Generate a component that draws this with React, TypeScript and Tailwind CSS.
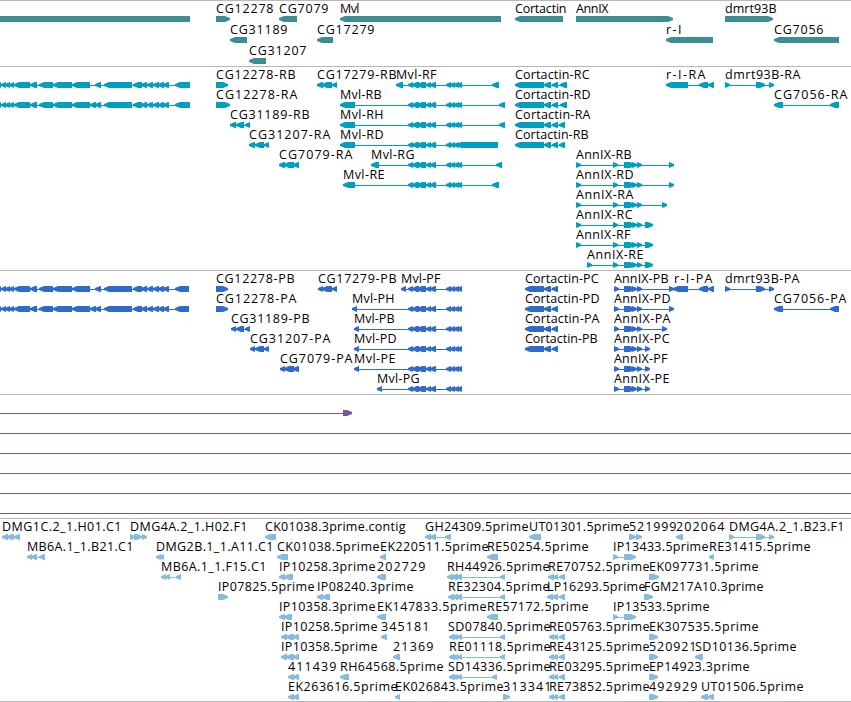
import React from 'react';

type Exon = [number, number];

interface Feature {
  row: number;
  label?: string;
  x: number;
  end?: number; // right edge of the label
  dir: 'L' | 'R';
  exons: Exon[];
}

interface TrackProps {
  color: string;
  height: number;
  pitch?: number;
  features: Feature[];
  className: string;
}

const HEAD = 5;

const f = (row: number, label: string, x: number, end: number, dir: 'L' | 'R', ...exons: Exon[]): Feature => ({
  row, label, x, end, dir, exons,
});

const bare = (row: number, dir: 'L' | 'R', ...exons: Exon[]): Feature => ({ row, x: exons[0][0], dir, exons });

const exonPoints = ([a, b]: Exon, dir: 'L' | 'R', y: number) => {
  const head = Math.min(HEAD, b - a);
  return dir === 'L'
    ? `${a},${y + 4} ${a},${y + 2} ${a + head},${y} ${b},${y} ${b},${y + 6} ${a + head},${y + 6}`
    : `${b},${y + 4} ${b},${y + 2} ${b - head},${y} ${a},${y} ${a},${y + 6} ${b - head},${y + 6}`;
};

const Track: React.FC<TrackProps> = ({ color, height, pitch = 20, features, className }) => (
  <section className={className}>
    <svg width={851} height={height} className="block">
      {features.map((ft, i) => {
        const y = 15 + ft.row * pitch;
        const from = ft.exons[0][0];
        const to = ft.exons[ft.exons.length - 1][1];
        return (
          <g key={i}>
            <rect x={from} y={y + 3} width={to - from} height={1} fill={color} />
            {ft.exons.map((ex, j) => (
              <polygon key={j} points={exonPoints(ex, ft.dir, y)} fill={color} />
            ))}
            {ft.label && (
              <text x={ft.x} y={y - 3} textLength={ft.end! - ft.x + 0.5} fill="#000000">
                {ft.label}
              </text>
            )}
          </g>
        );
      })}
    </svg>
  </section>
);

// Genes
const genes: Feature[] = [
  bare(0, 'L', [-10, 190]),
  f(0, 'CG12278', 216, 273, 'R', [216, 230]),
  f(0, 'CG7079', 279, 328, 'L', [279, 297]),
  f(0, 'Mvl', 340, 359, 'L', [340, 501]),
  f(0, 'Cortactin', 515, 566, 'L', [515, 563]),
  f(0, 'AnnIX', 576, 608, 'R', [576, 673]),
  f(0, 'dmrt93B', 725, 776, 'R', [725, 773]),
  f(1, 'CG31189', 230, 287, 'L', [230, 247]),
  f(1, 'CG17279', 317, 374, 'L', [317, 333]),
  f(1, 'r-I', 666, 681, 'L', [666, 713]),
  f(1, 'CG7056', 774, 823, 'L', [774, 839]),
  f(2, 'CG31207', 249, 306, 'L', [249, 266]),
];

// Exon groups shared by several transcripts
const leftA: Exon[] = [[1, 6], [5, 10], [9, 14], [14, 30], [30, 37], [39, 53], [53, 72], [72, 90]];
const leftB: Exon[] = [
  [95, 101], [104, 132], [133, 142], [141, 147], [147, 153], [153, 159], [158, 164], [163, 169],
];
const mvl: Exon[] = [
  [408, 413], [412, 419], [417, 426], [426, 431], [430, 436],
  [446, 451], [450, 455], [454, 459], [457, 462],
];
const ann: Exon[] = [[624, 635], [632, 637], [637, 642]];

const transcripts: Feature[] = [
  bare(0, 'L', [-4, 1], ...leftA, ...leftB, [175, 190]),
  bare(1, 'L', [-4, 1], ...leftA, [90, 96], ...leftB, [175, 190]),
  f(0, 'CG12278-RB', 216, 295, 'R', [216, 228]),
  f(0, 'CG17279-RB', 317, 396, 'L', [317, 323], [322, 332], [332, 337]),
  f(0, 'Mvl-RF', 396, 436, 'L', [396, 403], ...mvl, [492, 499]),
  f(0, 'Cortactin-RC', 515, 589, 'L', [515, 544], [544, 551], [552, 558], [560, 567]),
  f(0, 'r-I-RA', 666, 705, 'L', [666, 688], [699, 708], [708, 714]),
  f(0, 'dmrt93B-RA', 725, 800, 'R', [725, 730], [756, 765], [769, 774]),
  f(1, 'CG12278-RA', 216, 297, 'R', [216, 230]),
  f(1, 'Mvl-RB', 340, 381, 'L', [340, 355], ...mvl, [499, 505]),
  f(1, 'Cortactin-RD', 515, 590, 'L', [515, 544], [544, 551], [552, 558], [560, 567]),
  f(1, 'CG7056-RA', 774, 847, 'L', [774, 783], [830, 839]),
  f(2, 'CG31189-RB', 230, 309, 'L', [230, 236], [236, 244], [245, 250]),
  f(2, 'Mvl-RH', 340, 383, 'L', [340, 355], ...mvl, [499, 505]),
  f(2, 'Cortactin-RA', 515, 590, 'L', [515, 544], [544, 551], [552, 558], [559, 565]),
  f(3, 'CG31207-RA', 249, 330, 'L', [249, 255], [255, 264], [264, 269]),
  f(3, 'Mvl-RD', 340, 383, 'L', [340, 355], ...mvl, [457, 498]),
  f(3, 'Cortactin-RB', 515, 588, 'L', [515, 544], [544, 551], [552, 558], [559, 565]),
  f(4, 'CG7079-RA', 279, 352, 'L', [279, 285], [284, 294], [293, 299]),
  f(4, 'Mvl-RG', 371, 414, 'L', [371, 379], ...mvl, [496, 502]),
  f(4, 'AnnIX-RB', 576, 631, 'R', [576, 581], [613, 618], ...ann, [669, 674]),
  f(5, 'Mvl-RE', 343, 384, 'L', [343, 355], ...mvl, [492, 499]),
  f(5, 'AnnIX-RD', 576, 633, 'R', [576, 581], [613, 618], ...ann, [669, 674]),
  f(6, 'AnnIX-RA', 576, 633, 'R', [576, 581], [613, 618], ...ann, [662, 667]),
  f(7, 'AnnIX-RC', 576, 632, 'R', [576, 581], [613, 618], ...ann, [645, 653]),
  f(8, 'AnnIX-RF', 576, 630, 'R', [576, 581], [613, 618], ...ann, [645, 653]),
  f(9, 'AnnIX-RE', 587, 643, 'R', [587, 592], [613, 618], ...ann, [645, 653]),
];

const proteins: Feature[] = [
  bare(0, 'L', [-4, 1], ...leftA, ...leftB, [175, 189]),
  bare(1, 'L', [-4, 1], ...leftA, [90, 96], ...leftB, [175, 189]),
  f(0, 'CG12278-PB', 216, 294, 'R', [216, 228]),
  f(0, 'CG17279-PB', 318, 396, 'L', [318, 323], [322, 332], [332, 337]),
  f(0, 'Mvl-PF', 401, 440, 'L', [401, 406], ...mvl),
  f(0, 'Cortactin-PC', 525, 598, 'L', [525, 544], [544, 551], [552, 558]),
  f(0, 'AnnIX-PB', 614, 668, 'R', [614, 619], ...ann, [669, 674]),
  f(0, 'r-I-PA', 674, 712, 'L', [673, 688], [699, 708], [708, 714]),
  f(0, 'dmrt93B-PA', 725, 799, 'R', [725, 730], [756, 765], [769, 774]),
  f(1, 'CG12278-PA', 216, 296, 'R', [216, 228]),
  f(1, 'Mvl-PH', 352, 394, 'L', [352, 357], ...mvl),
  f(1, 'Cortactin-PD', 525, 599, 'L', [525, 544], [544, 551], [552, 558]),
  f(1, 'AnnIX-PD', 614, 670, 'R', [614, 619], ...ann, [669, 674]),
  f(1, 'CG7056-PA', 774, 846, 'L', [774, 783], [830, 839]),
  f(2, 'CG31189-PB', 231, 309, 'L', [231, 236], [236, 244], [245, 250]),
  f(2, 'Mvl-PB', 354, 394, 'L', [354, 359], ...mvl),
  f(2, 'Cortactin-PA', 525, 599, 'L', [525, 544], [544, 551], [552, 558]),
  f(2, 'AnnIX-PA', 614, 670, 'R', [614, 619], ...ann, [662, 667]),
  f(3, 'CG31207-PA', 250, 330, 'L', [250, 255], [255, 264], [264, 269]),
  f(3, 'Mvl-PD', 354, 396, 'L', [354, 359], ...mvl),
  f(3, 'Cortactin-PB', 525, 597, 'L', [525, 544], [544, 551], [552, 558]),
  f(3, 'AnnIX-PC', 614, 669, 'R', [614, 619], ...ann, [645, 650]),
  f(4, 'CG7079-PA', 280, 352, 'L', [280, 285], [284, 294], [293, 299]),
  f(4, 'Mvl-PE', 354, 395, 'L', [354, 359], ...mvl),
  f(4, 'AnnIX-PF', 614, 667, 'R', [614, 619], ...ann, [645, 650]),
  f(5, 'Mvl-PG', 377, 419, 'L', [377, 382], ...mvl),
  f(5, 'AnnIX-PE', 614, 669, 'R', [614, 619], ...ann, [645, 650]),
];

const re: Exon[] = [[549, 554], [553, 558], [559, 565]];
const sd: Exon[] = [[449, 455], [453, 458], [457, 462]];

const ests: Feature[] = [
  f(0, 'DMG1C.2_1.H01.C1', 2, 121, 'L', [2, 8], [7, 14], [14, 20]),
  f(0, 'DMG4A.2_1.H02.F1', 130, 247, 'R', [130, 135], [134, 142], [142, 147]),
  f(0, 'CK01038.3prime.contig', 265, 405, 'L', [265, 276]),
  f(0, 'GH24309.5prime', 425, 528, 'L', [425, 431], [430, 436], [445, 451]),
  f(0, 'UT01301.5prime', 529, 629, 'L', [529, 541]),
  f(0, '521999', 629, 676, 'R', [629, 636], [636, 642]),
  f(0, '202064', 676, 724, 'L', [676, 683]),
  f(0, 'DMG4A.2_1.B23.F1', 729, 844, 'R', [729, 734], [756, 765], [769, 774]),
  f(1, 'MB6A.1_1.B21.C1', 27, 133, 'L', [27, 32], [31, 37], [39, 45]),
  f(1, 'DMG2B.1_1.A11.C1', 156, 273, 'L', [156, 161], [159, 164]),
  f(1, 'CK01038.5prime', 277, 379, 'L', [277, 288]),
  f(1, 'EK220511.5prime', 380, 488, 'L', [380, 386]),
  f(1, 'RE50254.5prime', 487, 588, 'L', [487, 498]),
  f(1, 'IP13433.5prime', 613, 708, 'R', [613, 618], [624, 636]),
  f(1, 'RE31415.5prime', 709, 810, 'L', [709, 714]),
  f(2, 'MB6A.1_1.F15.C1', 161, 266, 'L', [161, 166], [165, 170], [176, 181]),
  f(2, 'IP10258.3prime', 279, 375, 'L', [279, 285], [284, 293]),
  f(2, '202729', 377, 425, 'L', [377, 386]),
  f(2, 'RH44926.5prime', 447, 549, 'L', [447, 453], [451, 458], [456, 462], [500, 505]),
  f(2, 'RE70752.5prime', 548, 649, 'L', [548, 554], [553, 558], [559, 565]),
  f(2, 'EK097731.5prime', 649, 758, 'R', [649, 659]),
  f(3, 'IP07825.5prime', 218, 314, 'R', [218, 228]),
  f(3, 'IP08240.3prime', 317, 413, 'L', [317, 323], [322, 330]),
  f(3, 'RE32304.5prime', 448, 549, 'L', [448, 454], [452, 458], [456, 462], [500, 505]),
  f(3, 'LP16293.5prime', 547, 645, 'L', [547, 553], [552, 558], [559, 565]),
  f(3, 'FGM217A10.3prime', 644, 763, 'R', [644, 653]),
  f(4, 'IP10358.3prime', 279, 375, 'L', [279, 285], [284, 292]),
  f(4, 'EK147833.5prime', 377, 486, 'L', [377, 386]),
  f(4, 'RE57172.5prime', 487, 588, 'L', [487, 498]),
  f(4, 'IP13533.5prime', 613, 709, 'R', [613, 618], [624, 636]),
  f(5, 'IP10258.5prime', 281, 377, 'L', [281, 287], [286, 294], [293, 299]),
  f(5, '345181', 381, 429, 'L', [381, 387]),
  f(5, 'SD07840.5prime', 448, 550, 'L', ...sd, [500, 505]),
  f(5, 'RE05763.5prime', 549, 649, 'L', ...re),
  f(5, 'EK307535.5prime', 649, 758, 'R', [649, 658]),
  f(6, 'IP10358.5prime', 281, 377, 'L', [281, 287], [286, 294], [293, 299]),
  f(6, '21369', 393, 433, 'L', [393, 400]),
  f(6, 'RE01118.5prime', 449, 550, 'L', ...sd, [500, 505]),
  f(6, 'RE43125.5prime', 549, 649, 'L', ...re),
  f(6, '520921', 649, 696, 'R', [649, 658]),
  f(6, 'SD10136.5prime', 695, 796, 'L', [695, 703]),
  f(7, '411439', 288, 336, 'L', [288, 294], [293, 299]),
  f(7, 'RH64568.5prime', 340, 443, 'L', [340, 349]),
  f(7, 'SD14336.5prime', 448, 550, 'L', ...sd, [492, 497]),
  f(7, 'RE03295.5prime', 549, 649, 'L', ...re),
  f(7, 'EP14923.3prime', 649, 749, 'R', [649, 658]),
  f(8, 'EK263616.5prime', 288, 397, 'L', [288, 294], [293, 299]),
  f(8, 'EK026843.5prime', 395, 503, 'L', [395, 400]),
  f(8, '313341', 503, 551, 'R', [503, 510]),
  f(8, 'RE73852.5prime', 549, 649, 'L', ...re),
  f(8, '492929', 649, 697, 'R', [649, 658]),
  f(8, 'UT01506.5prime', 701, 803, 'L', [701, 708], [708, 714]),
];

const spanning = [38, 58, 78, 98, 118];

const App: React.FC = () => (
  <main className="flex h-[702px] w-[851px] flex-col overflow-hidden bg-white font-['Open_Sans','Noto_Sans',sans-serif] text-[12.5px]">
    <Track className="h-[66px] border-t border-[#b8b8b8]" color="#3d8e94" height={65} pitch={21} features={genes} />
    <Track className="h-[204px] border-t border-[#b8b8b8]" color="#009fc0" height={203} features={transcripts} />
    <Track className="h-[124px] border-t border-[#b8b8b8]" color="#2f6bcd" height={123} features={proteins} />

    {/* Alignments running past the visible region */}
    <section className="h-[124px] border-t border-[#b8b8b8]">
      <svg width={851} height={123} className="block" fill="#7458a6">
        <rect x={0} y={18} width={352} height={1} />
        <polygon points={exonPoints([343, 352], 'R', 15)} />
        {spanning.map(y => (
          <rect key={y} x={0} y={y} width={851} height={1} />
        ))}
      </svg>
    </section>

    <Track className="h-[184px] border-y border-[#b8b8b8]" color="#87bbdd" height={182} features={ests} />
  </main>
);

export default App;
